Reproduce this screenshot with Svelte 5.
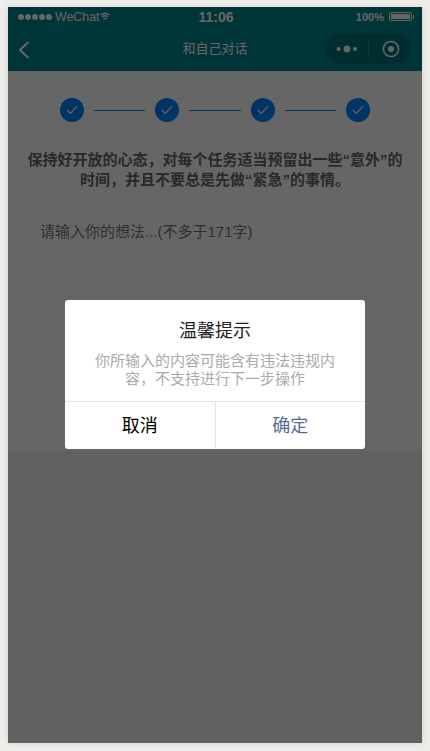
<script>
  const steps = [1, 2, 3, 4];
  const tip = "保持好开放的心态，对每个任务适当预留出一些“意外”的时间，并且不要总是先做“紧急”的事情。";
  const maxLen = 171;
</script>

<div class="phone">
  <header>
    <div class="status">
      <div class="carrier">
        <span class="dots">
          {#each [1, 2, 3, 4, 5] as d}
            <i></i>
          {/each}
        </span>
        <span class="name">WeChat</span>
        <svg class="wifi" width="10" height="9" viewBox="0 0 10 9">
          <path d="M0.5 3 Q5 -0.6 9.5 3" />
          <path d="M2 5 Q5 2.6 8 5" />
          <path d="M3.4 7 Q5 5.8 6.6 7" />
        </svg>
      </div>
      <div class="time">11:06</div>
      <div class="power">
        <span>100%</span>
        <span class="battery"><i></i></span>
        <span class="nub"></span>
      </div>
    </div>
    <div class="nav">
      <svg class="back" width="12" height="18" viewBox="0 0 12 18">
        <path d="M10.5 1 L2 9 L10.5 17" />
      </svg>
      <h1>和自己对话</h1>
      <div class="capsule">
        <svg width="22" height="8" viewBox="0 0 22 8">
          <circle cx="2.5" cy="4" r="2" />
          <circle cx="11" cy="4" r="3.4" />
          <circle cx="19" cy="4" r="2" />
        </svg>
        <span class="sep"></span>
        <svg width="18" height="18" viewBox="0 0 18 18">
          <circle class="ring" cx="9" cy="9" r="7.6" />
          <circle cx="9" cy="9" r="3" />
        </svg>
      </div>
    </div>
  </header>

  <main>
    <div class="stepper">
      {#each steps as s, i}
        {#if i > 0}
          <span class="line"></span>
        {/if}
        <span class="step">
          <svg width="12" height="10" viewBox="0 0 12 10">
            <path d="M1 5.2 L4.4 8.4 L11 1.4" />
          </svg>
        </span>
      {/each}
    </div>
    <p class="tip">{tip}</p>
    <div class="input">请输入你的想法...(不多于{maxLen}字)</div>
  </main>

  <div class="overlay">
    <div class="dialog">
      <div class="body">
        <h2>温馨提示</h2>
        <p>你所输入的内容可能含有违法违规内容，不支持进行下一步操作</p>
      </div>
      <div class="actions">
        <button>取消</button>
        <button class="ok">确定</button>
      </div>
    </div>
  </div>
</div>

<style>
  :global(body) {
    margin: 0;
    background: #eeede9;
    font-family: "Liberation Sans", "Noto Sans CJK SC", sans-serif;
  }

  .phone {
    position: relative;
    width: 414px;
    height: 736px;
    margin: 7px 8px;
    background: #f2f2f2;
    box-shadow: 0 0 6px rgba(0, 0, 0, 0.12);
    overflow: hidden;
  }

  header {
    background: #008489;
    color: #fff;
    height: 64px;
  }

  .status {
    display: grid;
    grid-template-columns: 1fr auto 1fr;
    align-items: center;
    height: 19px;
    padding: 0 8px 0 10px;
    font-size: 12px;
  }

  .carrier {
    display: flex;
    align-items: center;
    gap: 3px;
  }

  .name {
    font-size: 12.4px;
  }

  .dots {
    display: flex;
    gap: 1px;
  }

  .dots i {
    width: 6px;
    height: 6px;
    border-radius: 50%;
    background: #fff;
  }

  .wifi {
    margin-left: -3px;
    fill: none;
    stroke: #fff;
    stroke-width: 1.4;
  }

  .time {
    font-size: 14px;
    font-weight: bold;
  }

  .power {
    display: flex;
    align-items: center;
    justify-content: flex-end;
    font-weight: bold;
    font-size: 11px;
  }

  .battery {
    display: flex;
    width: 23px;
    height: 9px;
    margin-left: 5px;
    padding: 1px;
    border: 1px solid #fff;
    border-radius: 2px;
    box-sizing: border-box;
  }

  .battery i {
    flex: 1;
    background: #fff;
  }

  .nub {
    width: 1px;
    height: 4px;
    margin-left: 1px;
    background: #fff;
  }

  .nav {
    position: relative;
    display: flex;
    align-items: center;
    justify-content: space-between;
    height: 45px;
    padding: 0 10px;
  }

  .back {
    margin-top: 3px;
    fill: none;
    stroke: #fff;
    stroke-width: 2;
  }

  h1 {
    position: absolute;
    left: 0;
    right: 0;
    margin: 0 0 2px;
    text-align: center;
    font-size: 13px;
    font-weight: normal;
  }

  .capsule {
    display: flex;
    align-items: center;
    box-sizing: border-box;
    width: 87px;
    height: 32px;
    padding-left: 10px;
    border: 1px solid rgba(255, 255, 255, 0.1);
    border-radius: 16px;
    background: rgba(0, 0, 0, 0.15);
    fill: #fff;
  }

  .sep {
    width: 1px;
    height: 18px;
    margin: 0 13px 0 10px;
    background: rgba(255, 255, 255, 0.2);
  }

  .ring {
    fill: none;
    stroke: #fff;
    stroke-width: 1.5;
  }

  main {
    box-sizing: border-box;
    min-height: 380px;
    padding-top: 27px;
    background: #fff;
  }

  .stepper {
    display: flex;
    align-items: center;
    width: 310px;
    margin: 0 auto;
  }

  .step {
    display: flex;
    align-items: center;
    justify-content: center;
    width: 24px;
    height: 24px;
    border-radius: 50%;
    background: #0080ff;
  }

  .step svg {
    fill: none;
    stroke: #fff;
    stroke-width: 1.2;
  }

  .line {
    flex: 1;
    height: 1px;
    margin: 0 10px;
    background: #0080ff;
  }

  .tip {
    margin: 28px 0 0;
    padding: 0 16px;
    text-align: center;
    font-size: 15px;
    font-weight: bold;
    line-height: 20px;
    color: #666;
  }

  .input {
    margin: 32px 0 0 32px;
    font-size: 15px;
    line-height: 20px;
    color: #777;
  }

  .overlay {
    position: absolute;
    inset: 0;
    display: flex;
    align-items: center;
    justify-content: center;
    padding-bottom: 2px;
    box-sizing: border-box;
    background: rgba(0, 0, 0, 0.6);
  }

  .dialog {
    width: 300px;
    background: #fff;
    border-radius: 3px;
    overflow: hidden;
  }

  .body {
    padding: 20px 30px 12px;
    text-align: center;
  }

  h2 {
    margin: 0 0 10px;
    font-size: 18px;
    font-weight: normal;
    line-height: 22px;
    color: #222;
  }

  .body p {
    margin: 0;
    font-size: 15px;
    line-height: 18.5px;
    color: #aaa;
  }

  .actions {
    display: flex;
    border-top: 1px solid #e6e6e6;
  }

  button {
    flex: 1;
    height: 47px;
    padding: 0 0 3px;
    border: none;
    background: none;
    font-family: inherit;
    font-size: 18px;
    color: #000;
  }

  button + button {
    border-left: 1px solid #e6e6e6;
  }

  .ok {
    color: #576b95;
  }
</style>
